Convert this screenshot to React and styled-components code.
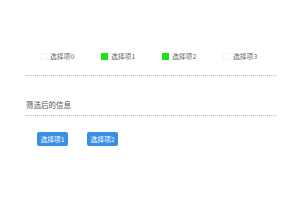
import React from 'react';
import styled, { createGlobalStyle } from 'styled-components';

const GlobalStyle = createGlobalStyle`
    body {
        margin: 0;
        background: #ffffff;
        font-family: "Noto Sans CJK SC", "Noto Sans", sans-serif;
    }
`;

const Page = styled.div`
    width: 250px;
    padding: 48px 0 0 26px;
`;

const OptionRow = styled.div`
    display: flex;
    align-items: center;
    height: 16px;
    padding: 0 0 11px 14px;
    border-bottom: 1px dotted #b8b8b8;
`;

const Option = styled.div`
    flex-shrink: 0;
    width: 61px;
    display: flex;
    align-items: center;
    gap: 3px;
    font-size: 6.8px;
    color: #666;
`;

const Box = styled.span`
    width: 7px;
    height: 7px;
    box-sizing: border-box;
    background: ${props => (props.checked ? '#1ee01e' : '#fff')};
    border: 1px solid ${props => (props.checked ? '#1ee01e' : '#f4f4f4')};
`;

const Title = styled.div`
    margin-top: 24px;
    height: 10px;
    line-height: 10px;
    padding-bottom: 5px;
    font-size: 7.5px;
    color: #555;
    border-bottom: 1px dotted #b8b8b8;
`;

const ButtonRow = styled.div`
    display: flex;
    gap: 19px;
    margin-top: 16px;
    padding-left: 11px;
`;

const Tag = styled.div`
    width: 31px;
    height: 14px;
    display: flex;
    align-items: center;
    justify-content: center;
    background: #3a8ee6;
    border-radius: 2px;
    color: #fff;
    font-size: 6.8px;
`;

const options = [
    { id: 0, label: '选择项0', checked: false },
    { id: 1, label: '选择项1', checked: true },
    { id: 2, label: '选择项2', checked: true },
    { id: 3, label: '选择项3', checked: false },
];

export default function App() {
    return (
        <Page>
            <GlobalStyle />
            <OptionRow>
                {options.map(opt => (
                    <Option key={opt.id}>
                        <Box checked={opt.checked} />
                        {opt.label}
                    </Option>
                ))}
            </OptionRow>
            <Title>筛选后的信息</Title>
            <ButtonRow>
                {options.filter(o => o.checked).map(o => (
                    <Tag key={o.id}>{o.label}</Tag>
                ))}
            </ButtonRow>
        </Page>
    );
}
